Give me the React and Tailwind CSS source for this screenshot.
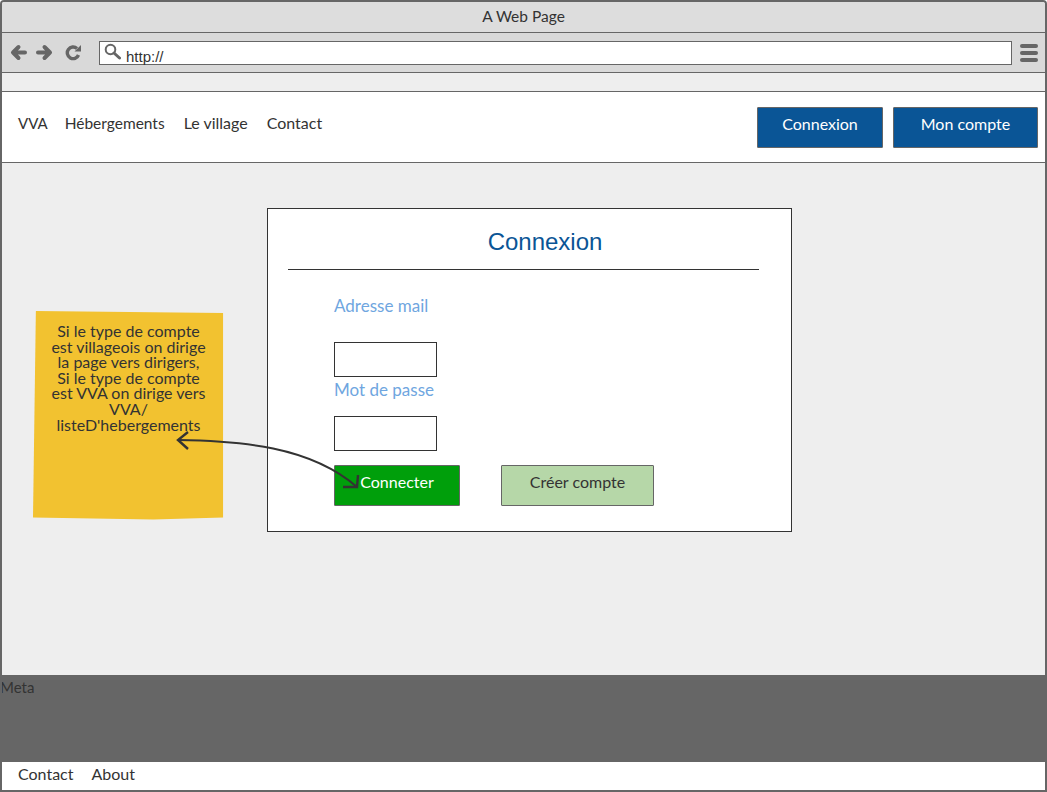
const font = "font-['Lato','Liberation_Sans',sans-serif]";

const BackIcon = () => (
  <svg width="17" height="17" viewBox="0 0 17 17" fill="none" stroke="#666" strokeWidth="4" strokeLinecap="round" strokeLinejoin="round">
    <path d="M8.5 3 L3 8.5 L8.5 14 M3 8.5 H15" />
  </svg>
);

const ForwardIcon = () => (
  <svg width="17" height="17" viewBox="0 0 17 17" fill="none" stroke="#666" strokeWidth="4" strokeLinecap="round" strokeLinejoin="round">
    <path d="M8.5 3 L14 8.5 L8.5 14 M14 8.5 H2" />
  </svg>
);

const ReloadIcon = () => (
  <svg width="17" height="17" viewBox="0 0 17 17" fill="none">
    <path d="M13.5 11 A5.8 5.8 0 1 1 12 4.5" stroke="#666" strokeWidth="3.4" />
    <path d="M9.5 7.5 H16 V1 Z" fill="#666" />
  </svg>
);

const SearchIcon = () => (
  <svg width="17" height="17" viewBox="0 0 17 17" fill="none" stroke="#666">
    <circle cx="6.5" cy="6.5" r="4.8" strokeWidth="2" />
    <path d="M10 10 L15.5 15" strokeWidth="3" strokeLinecap="round" />
  </svg>
);

const MenuIcon = () => (
  <div className="flex flex-col gap-[3px]">
    <div className="w-[18px] h-[4px] rounded-full bg-[#666]" />
    <div className="w-[18px] h-[4px] rounded-full bg-[#666]" />
    <div className="w-[18px] h-[4px] rounded-full bg-[#666]" />
  </div>
);

const StickyNote = () => (
  <div className="absolute left-[31px] top-[309px] w-[191px] h-[209px] bg-[#f2c230] [clip-path:polygon(1.5%_0,99.5%_1%,99.5%_98.8%,63%_99.8%,0_98.8%)]">
    <p className={`pt-[12px] text-center text-[16px] leading-[15.6px] text-[#333] ${font}`}>
      Si le type de compte<br />
      est villageois on dirige<br />
      la page vers dirigers,<br />
      Si le type de compte<br />
      est VVA on dirige vers<br />
      VVA/<br />
      listeD'hebergements
    </p>
  </div>
);

const Arrow = () => (
  <svg className="absolute -left-[2px] -top-[2px] pointer-events-none" width="1047" height="792" fill="none" stroke="#333" strokeWidth="2">
    <path d="M178 440 C 240 441 310 446 357 487" />
    <path d="M188 432 L178 440 L188 449" strokeWidth="2.4" />
    <path d="M358 475 L357 487 L343 487" strokeWidth="2.4" />
  </svg>
);

export default function App() {
  return (
    <div className={`relative w-[1047px] h-[792px] overflow-hidden flex flex-col border-x-2 border-t-2 border-[#666] rounded-t-[4px] bg-[#eee] ${font}`}>
      <div className="h-[31px] shrink-0 flex items-center justify-center bg-[#ddd] border-b-[1px] border-[#666] text-[15.5px] text-[#333]">
        A Web Page
      </div>
      <div className="h-[40px] shrink-0 flex items-center bg-[#d9d9d9] border-b border-[#666] pl-[8px] pr-[7px]">
        <BackIcon />
        <div className="ml-[9px]"><ForwardIcon /></div>
        <div className="ml-[12px]"><ReloadIcon /></div>
        <div className="ml-[17px] flex-1 h-[24px] bg-white border border-[#666] flex items-start pl-[4px] pt-[1px]">
          <SearchIcon />
          <span className="ml-[5px] mt-[5px] text-[15px] leading-[18px] text-[#333] font-['Liberation_Sans',sans-serif]">http://</span>
        </div>
        <div className="ml-[8px]"><MenuIcon /></div>
      </div>
      <div className="h-[19px] shrink-0 bg-[#eee] border-b border-[#666]" />
      <nav className="h-[71px] shrink-0 flex items-start bg-white border-b border-[#666] pl-[16px] pr-[7px]">
        <div className="flex gap-[17px] pt-[21px] text-[16px] leading-[20px] text-[#333]">
          <span className="text-[15px]">VVA</span>
          <span className="text-[15.5px]">Hébergements</span>
          <span className="ml-[2px]">Le village</span>
          <span className="ml-[2px]">Contact</span>
        </div>
        <div className="ml-auto flex gap-[10px] pt-[15px]">
          <button className="w-[126px] h-[41px] pb-[8px] rounded-[1px] bg-[#0a5596] border border-[#666] text-white text-[16px]">Connexion</button>
          <button className="w-[145px] h-[41px] pb-[8px] rounded-[1px] bg-[#0a5596] border border-[#666] text-white text-[16px]">Mon compte</button>
        </div>
      </nav>
      <main className="flex-1 pl-[265px] pt-[45px]">
        <div className="w-[525px] h-[324px] bg-white border border-[#333] px-[20px]">
          <h1 className="h-[61px] pl-[43px] pt-[17px] text-center text-[#0a5596] text-[24px] leading-[32px] border-b border-[#333] w-[471px] font-['Liberation_Sans',sans-serif]">Connexion</h1>
          <div className="pl-[46px] text-[#6fa6e0] text-[17px]">
            <div className="mt-[24px] h-[24px] leading-[24px]">Adresse mail</div>
            <input className="block mt-[24px] w-[103px] h-[35px] bg-white border border-[#333]" />
            <div className="h-[24px] leading-[26px]">Mot de passe</div>
            <input className="block mt-[15px] w-[103px] h-[35px] bg-white border border-[#333]" />
            <div className="mt-[14px] flex gap-[41px]">
              <button className="w-[126px] h-[41px] pb-[7px] rounded-[1px] bg-[#009f0b] border border-[#666] text-white text-[16px]">Connecter</button>
              <button className="w-[153px] h-[41px] pb-[7px] rounded-[1px] bg-[#b6d7a8] border border-[#666] text-[#333] text-[16px]">Créer compte</button>
            </div>
          </div>
        </div>
      </main>
      <footer className="shrink-0 -mx-[2px]">
        <div className="h-[88px] bg-[#666] border-t border-[#eee] text-[15px] leading-[24px] text-[#333]">Meta</div>
        <div className="h-[30px] bg-white border-x-2 border-b-2 border-[#666] flex gap-[19px] pl-[16px] pt-[1px] text-[16px] leading-[22px] text-[#333]">
          <span>Contact</span>
          <span className="-ml-px">About</span>
        </div>
      </footer>
      <StickyNote />
      <Arrow />
    </div>
  );
}
